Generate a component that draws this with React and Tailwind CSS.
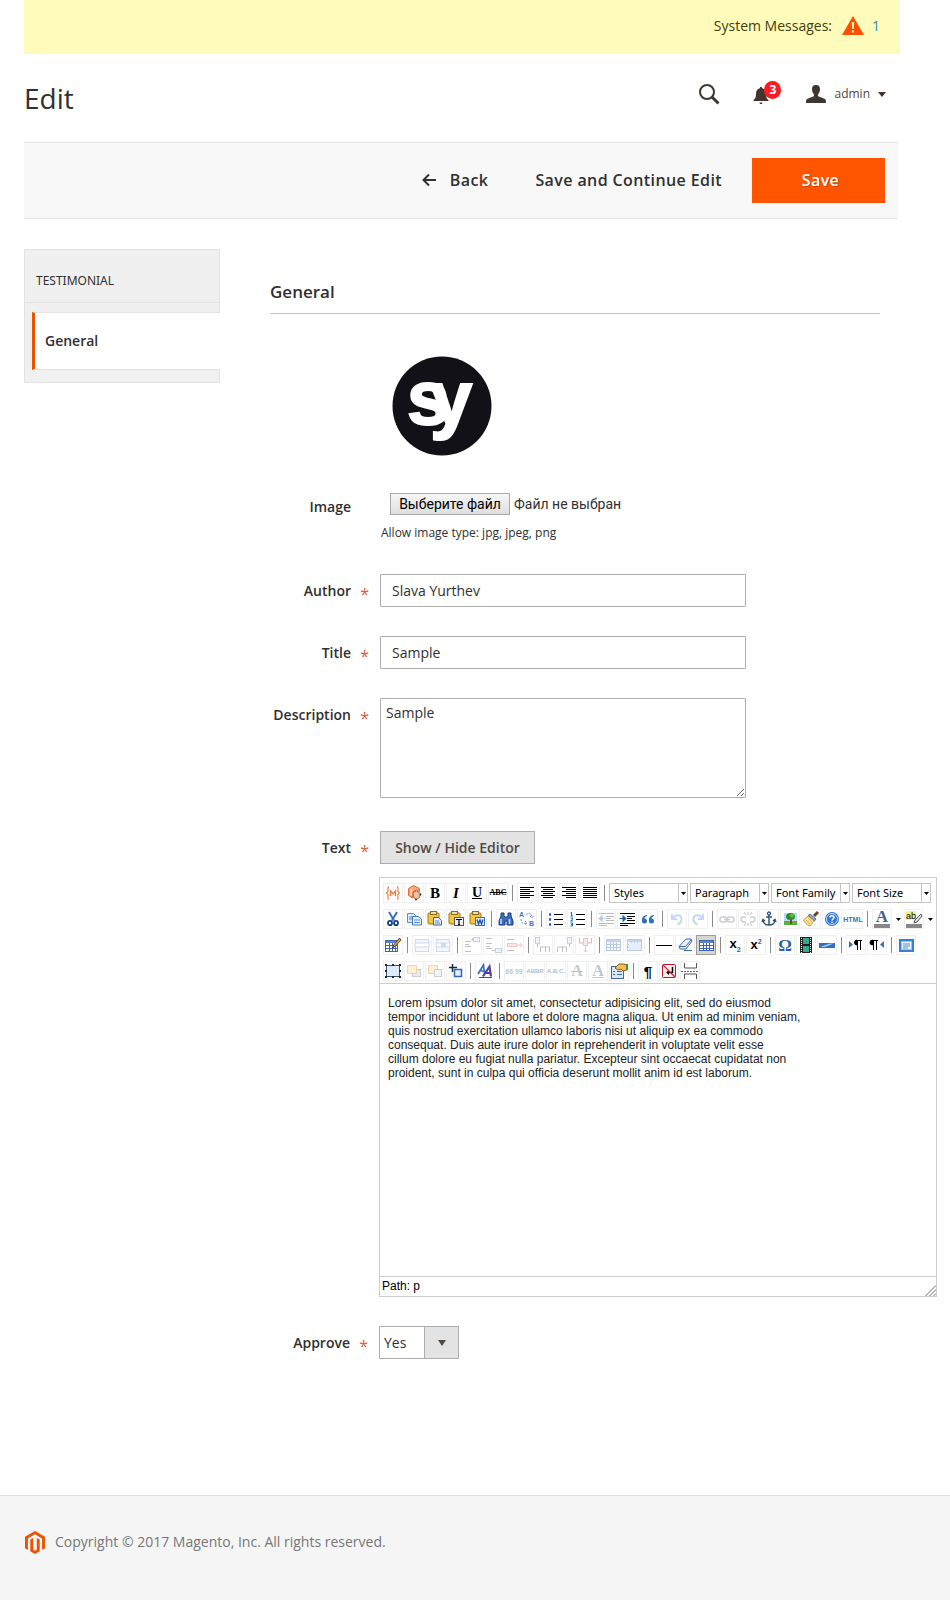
import React from "react";

const Svg = ({ children, className = "" }) => (
  <svg viewBox="0 0 20 20" width="20" height="20" className={"block " + className} fill="none" aria-hidden="true">
    {children}
  </svg>
);

const Lines = ({ rows }) => (
  <Svg>
    {rows.map(([x, w], i) => (
      <rect key={i} x={x} y={4 + i * 2} width={w} height="1" fill="#000" />
    ))}
  </Svg>
);

const Clip = () => (
  <>
    <rect x="3" y="4" width="11" height="11" rx="1" fill="#f4c63c" stroke="#a87410" />
    <rect x="5.500" y="2.500" width="6" height="3" fill="#e8e0b0" stroke="#8a6a20" />
  </>
);

const Grid = ({ x = 3, y = 5, w = 15, h = 11, c = "#3f66a8", head = "#5b86cf", fill = "#fff" }) => (
  <>
    <rect x={x + 0.5} y={y + 0.5} width={w - 1} height={h - 1} fill={fill} stroke={c} />
    <rect x={x + 1} y={y + 1} width={w - 2} height="2" fill={head} />
    <path d={`M${x + 4.5} ${y + 3}v${h - 3}M${x + 7.5} ${y + 3}v${h - 3}M${x + 10.5} ${y + 3}v${h - 3}M${x} ${y + 5.5}h${w}M${x} ${y + 8.5}h${w}`} stroke={c} />
  </>
);

const FADE = "opacity-30";

const ICONS = {
  variable: (
    <Svg>
      <path d="M6 4C4 4 5.500 7 5 8.500L3.500 10 5 11.500C5.500 13 4 16 6 16M14 4c2 0 .5 3 1 4.500L16.500 10 15 11.500c-.5 1.500 1 4.500-1 4.500" stroke="#f28c5a" strokeWidth="1.300" />
      <path d="M7.500 13V8l2.500 3 2.500-3v5" stroke="#ef7b45" strokeWidth="1.400" />
    </Svg>
  ),
  widget: (
    <Svg>
      <path d="M9.500 2.500l6 3v3l-3-1.500-4 2v6l-4-2.500v-7z" fill="#f9a67d" stroke="#e9662c" />
      <path d="M7.500 6.500v6" stroke="#fff" strokeWidth="1.500" />
      <path d="M9 9.500l3.500-1.500 4 2.500-1 4-3 2-3-2z" fill="#e6c3ae" stroke="#b8623a" />
      <circle cx="16.500" cy="11.500" r="1" fill="#333" /><circle cx="12" cy="16.500" r="1" fill="#333" />
    </Svg>
  ),
  left: <Lines rows={[[3, 14], [3, 10], [3, 14], [3, 10], [3, 14], [3, 10]]} />,
  center: <Lines rows={[[3, 14], [5, 10], [3, 14], [5, 10], [3, 14], [5, 10]]} />,
  right: <Lines rows={[[3, 14], [7, 10], [3, 14], [7, 10], [3, 14], [7, 10]]} />,
  full: <Lines rows={[[3, 14], [3, 14], [3, 14], [3, 14], [3, 14], [3, 14]]} />,
  cut: (
    <Svg>
      <path d="M6 3l5 8.500M14 3L9 11.500" stroke="#3f6fb8" strokeWidth="2" />
      <ellipse cx="7" cy="14" rx="2" ry="2.200" stroke="#123f86" strokeWidth="1.800" /><ellipse cx="13" cy="14" rx="2" ry="2.200" stroke="#123f86" strokeWidth="1.800" />
    </Svg>
  ),
  copy: (
    <Svg>
      <path d="M3.500 4.500h6l2 2v7h-8z" fill="#dceafc" stroke="#5b8bd0" /><path d="M5 8h5M5 10h5" stroke="#5b8bd0" />
      <path d="M8.500 7.500h6l3 2.500v6h-9z" fill="#e8f1fd" stroke="#3f74c4" /><path d="M10 11h6M10 13.500h6" stroke="#5b8bd0" />
    </Svg>
  ),
  paste: (
    <Svg><Clip /><path d="M8.500 8.500h5l3 3v4.500h-8z" fill="#e8f1fd" stroke="#3c5f95" /><path d="M10 12h4M10 14h5" stroke="#5b8bd0" /></Svg>
  ),
  pasteText: (
    <Svg><Clip /><rect x="8.500" y="8.500" width="9" height="8" fill="#f3f3f3" stroke="#555" /><path d="M10.500 11v-.5h5v.5M13 10.500v5M12 15.500h2" stroke="#000" strokeWidth="1.200" /></Svg>
  ),
  pasteWord: (
    <Svg><Clip /><rect x="8.500" y="8.500" width="9" height="8" fill="#dbe9fc" stroke="#3c6fc0" /><path d="M10 10.500l1.500 4.500 1.500-4 1.500 4 1.500-4.500" stroke="#1c4fa8" strokeWidth="1.300" /></Svg>
  ),
  find: (
    <Svg>
      <path d="M5 4h3v3l1 1h2l1-1V4h3v3l2 5v4h-6v-4H9v4H3v-4l2-5z" fill="#3a6db8" stroke="#1b3f80" />
      <path d="M5 10v5M13.500 10v5" stroke="#cfe0fa" strokeWidth="1.500" />
    </Svg>
  ),
  replace: (
    <Svg>
      <text x="2" y="8" fontSize="7" fontFamily="Liberation Sans" fontWeight="bold" fill="#4877b8">A</text>
      <text x="12" y="17" fontSize="7" fontFamily="Liberation Sans" fontWeight="bold" fill="#4877b8">B</text>
      <path d="M9 6c3-3 5-2 6 2m-2-1l2 2 2-2.500M4 10c0 4 2 5 6 4m-2-2l2 2-2 2" stroke="#5c8fd6" strokeDasharray="2 1" />
    </Svg>
  ),
  bullets: (
    <Svg>
      <path d="M8 5.500h9M8 10.500h9M8 15.500h9" stroke="#000" />
      <path d="M3 5.500h2M3 10.500h2M3 15.500h2" stroke="#1c5fb0" strokeWidth="2.500" />
    </Svg>
  ),
  numbers: (
    <Svg>
      <path d="M9 5.500h9M9 10.500h9M9 15.500h9" stroke="#000" />
      <path d="M4.500 3v4M3.500 4h1M3.500 7h2.500M3.500 9h2v1.500l-2 1.500h2.500M3.500 14h2v3h-2M4 15.500h1.500" stroke="#1c6fc0" />
    </Svg>
  ),
  outdent: (
    <Svg className="opacity-40"><path d="M3 4.500h15M10 7.500h8M10 9.500h5M10 11.500h8M3 14.500h15M3 16.500h8" stroke="#555" /><path d="M3 9.500l3-3v6zM5 9.500h4" fill="#4070b0" stroke="#4070b0" /></Svg>
  ),
  indent: (
    <Svg><path d="M3 4.500h15M10 7.500h8M10 9.500h5M10 11.500h8M3 14.500h15M3 16.500h8" stroke="#000" /><path d="M9 9.500l-3-3v6zM2.500 9.500h4" fill="#1c5fb0" stroke="#1c5fb0" /></Svg>
  ),
  quote: (
    <Svg>
      <path d="M9 6C5 6.500 3.500 9 4 12a2.500 2.500 0 1 0 2.500-2.500C6.500 8 7.500 7.500 9 7zM16 6c-4 .5-5.500 3-5 6a2.500 2.500 0 1 0 2.500-2.500c0-1.500 1-2 2.500-2.500z" fill="#2f6fb8" />
    </Svg>
  ),
  undo: <Svg className={FADE}><path d="M5 5v5h5M5.500 9.500C8 5 14 5 14.500 9.500c.3 3-2 5-4 6" stroke="#4a7fd0" strokeWidth="2" /></Svg>,
  redo: <Svg className={FADE}><path d="M15 5v5h-5M14.500 9.500C12 5 6 5 5.500 9.500c-.3 3 2 5 4 6" stroke="#4a7fd0" strokeWidth="2" /></Svg>,
  link: <Svg className={FADE}><rect x="3" y="8" width="7" height="5" rx="2.500" stroke="#555c6b" strokeWidth="1.500" /><rect x="10" y="8" width="7" height="5" rx="2.500" stroke="#555c6b" strokeWidth="1.500" /><path d="M7 10.500h6" stroke="#555c6b" strokeWidth="1.500" /></Svg>,
  unlink: <Svg className={FADE}><path d="M8 8H5.500a2.500 2.500 0 0 0 0 5H8M12 8h2.500a2.500 2.500 0 0 1 0 5H12M10 3v3M10 14v3M6 3l2 3M14 3l-2 3M6 17l2-3M14 17l-2-3" stroke="#555c6b" strokeWidth="1.300" /></Svg>,
  anchor: <Svg><circle cx="10" cy="4.500" r="1.500" stroke="#2f5580" strokeWidth="1.300" /><path d="M10 6v10M7 8h6M4 11c0 3 2.500 5 6 5s6-2 6-5M3 13l1-2.500L6 12M17 13l-1-2.500L14 12" stroke="#2f5580" strokeWidth="1.500" /></Svg>,
  image: <Svg><rect x="4" y="4" width="13" height="12" fill="#b8dcf5" /><rect x="4" y="12" width="13" height="4" fill="#5fae3c" /><path d="M10 9h2v6h-2z" fill="#7a4a1c" /><ellipse cx="10.500" cy="7.500" rx="4.500" ry="3.500" fill="#2c8a2c" /><ellipse cx="12" cy="6.500" rx="2.500" ry="2" fill="#58b83c" /></Svg>,
  cleanup: <Svg><path d="M17 3l-4 4" stroke="#6a4a1c" strokeWidth="3" /><path d="M9 5l6 5-1.500 2L7 6.500z" fill="#8fa8cc" stroke="#55709a" /><path d="M7 7l6 5-4 5c-3-1-5-3-6.500-6z" fill="#fbe39a" stroke="#c49a30" /><path d="M5 11l4 4M7.500 9.500l3 3" stroke="#d8b050" /></Svg>,
  help: <Svg><circle cx="10" cy="10" r="7" fill="#2f74d0" /><circle cx="10" cy="10" r="5.500" stroke="#cfe3fb" /><path d="M8 8.500c0-2.500 4-2.500 4 0 0 1.500-2 1.500-2 3M10 12.500v1.500" stroke="#fff" strokeWidth="1.500" /></Svg>,
  hilite: (
    <Svg>
      <rect x="2" y="2" width="10" height="9" fill="#f9f08a" />
      <text x="2" y="10" fontSize="9" fontFamily="Liberation Sans" fill="#000">ab</text>
      <path d="M17 5l-6 6-1 3 3-1 5-6z" fill="#d9e4f2" stroke="#555" /><rect x="2" y="15" width="16" height="4" fill="#888" />
    </Svg>
  ),
  table: <Svg><Grid x={2} w={13} h={12} /><path d="M16.500 3l-6 7-1 3 3-2 5.500-6z" fill="#d99a4a" stroke="#6a4118" /></Svg>,
  rowProps: <Svg className={FADE}><rect x="3.500" y="4.500" width="13" height="12" fill="#dce8fa" stroke="#5b86cf" /><rect x="3" y="8" width="14" height="4" fill="#fff" stroke="#5b86cf" /></Svg>,
  cellProps: <Svg className={FADE}><rect x="3.500" y="4.500" width="13" height="12" fill="#dce8fa" stroke="#5b86cf" /><rect x="3" y="8" width="14" height="4" fill="#fff" stroke="#5b86cf" /><rect x="8" y="8" width="5" height="4" fill="#5b86cf" /></Svg>,
  rowBefore: <Svg className={FADE}><path d="M3 6.500h6M3 11.500h6M3 16.500h6M3 9.500h4" stroke="#333" /><rect x="11.500" y="2.500" width="6" height="4" fill="#cfe0fa" stroke="#3f66a8" /><path d="M9 4.500l2-1.500v3z" fill="#333" /></Svg>,
  rowAfter: <Svg className={FADE}><path d="M3 3.500h6M3 8.500h6M3 13.500h6M3 11.500h4" stroke="#333" /><rect x="12.500" y="13.500" width="6" height="4" fill="#cfe0fa" stroke="#3f66a8" /><path d="M9 15.500h3" stroke="#333" /></Svg>,
  rowDelete: <Svg className={FADE}><path d="M3 4.500h7M3 15.500h7" stroke="#333" /><rect x="3.500" y="8.500" width="9" height="3" fill="#f7b0b0" stroke="#c23b4b" /><path d="M12 10h6m-2-2l2 2-2 2" stroke="#c23b4b" /></Svg>,
  colBefore: <Svg className={FADE}><path d="M7.500 17v-5h9v5M12.500 12v5" stroke="#333" /><rect x="2.500" y="2.500" width="4" height="6" fill="#cfe0fa" stroke="#3f66a8" /><path d="M4.500 9v3" stroke="#333" /></Svg>,
  colAfter: <Svg className={FADE}><path d="M3.500 17v-5h9v5M8.500 12v5" stroke="#333" /><rect x="13.500" y="2.500" width="4" height="6" fill="#cfe0fa" stroke="#3f66a8" /><path d="M15.500 9v3" stroke="#333" /></Svg>,
  colDelete: <Svg className={FADE}><path d="M4.500 3v5h4M16.500 3v5h-4" stroke="#333" /><rect x="8.500" y="3.500" width="4" height="7" fill="#f7b0b0" stroke="#c23b4b" /><path d="M10.500 11v6m-2-2l2 2 2-2" stroke="#c23b4b" /></Svg>,
  split: <Svg className="opacity-35"><Grid x={2} y={4} h={12} fill="#dce8fa" /></Svg>,
  merge: <Svg className="opacity-35"><Grid x={2} y={4} h={12} fill="#cfe0fa" /><rect x="4" y="8" width="12" height="7" fill="#b5d0f5" /></Svg>,
  hr: <Svg><path d="M2 10.500h16" stroke="#000" /></Svg>,
  eraser: <Svg><path d="M11 4h5l1 2-6 8H5l-1-2.500z" fill="#eef4fc" stroke="#3f66a8" /><path d="M4.500 11.500h6l6-7M9 15.500h8" stroke="#3f66a8" /></Svg>,
  visual: <Svg><Grid /></Svg>,
  media: <Svg><rect x="4" y="2" width="12" height="16" fill="#222" /><path d="M5.500 3v15M14.500 3v15" stroke="#fff" strokeDasharray="1 1" /><rect x="7" y="3" width="6" height="6" fill="#37a88c" /><rect x="7" y="11" width="6" height="6" fill="#37a88c" /></Svg>,
  advhr: <Svg><rect x="2" y="8" width="16" height="5" fill="#2c6fc4" /><path d="M3 12l10-3.500h4L8 12z" fill="#a9cdf7" /></Svg>,
  ltr: <Svg><path d="M3 6l4 3.500L3 13z" fill="#3f6fb0" /><path d="M11 5a2.500 2.500 0 0 0 0 5z" fill="#000" stroke="#000" /><path d="M11.500 5v10M14.500 5v10M11 5.500h5" stroke="#000" /></Svg>,
  rtl: <Svg><path d="M17 6l-4 3.500 4 3.500z" fill="#3f6fb0" /><path d="M5.500 5a2.500 2.500 0 0 0 0 5z" fill="#000" stroke="#000" /><path d="M6.500 5v10M9.500 5v10M6 5.500h5" stroke="#000" /></Svg>,
  fullscreen: <Svg><rect x="3" y="4" width="15" height="13" fill="#3a7fd6" /><rect x="5.500" y="6.500" width="10" height="8" fill="#e9f2fd" stroke="#9cc3f2" /><path d="M7 9h7M7 11h7M7 13h5" stroke="#5a8fd0" /></Svg>,
  layer: <Svg><rect x="3.500" y="4.500" width="13" height="11" fill="#dfeafa" stroke="#3c4f6b" /><path d="M2 3h2v2H2zM16 3h2v2h-2zM2 15h2v2H2zM16 15h2v2h-2zM9 3h2v2H9zM9 15h2v2H9zM2 9h2v2H2zM16 9h2v2h-2z" fill="#16294a" /></Svg>,
  forward: <Svg className="opacity-45"><rect x="8.500" y="8.500" width="8" height="7" fill="#ccd5e2" stroke="#8895a8" /><rect x="3.500" y="4.500" width="9" height="8" fill="#fbe2a0" stroke="#d0a850" /></Svg>,
  backward: <Svg className="opacity-45"><rect x="3.500" y="4.500" width="9" height="8" fill="#fbe2a0" stroke="#d0a850" /><rect x="9.500" y="8.500" width="7" height="7" fill="#e2e6ec" stroke="#8895a8" /></Svg>,
  absolute: <Svg><path d="M6.500 3v8M3 6.500h8" stroke="#16294a" strokeWidth="1.500" /><rect x="8.500" y="8.500" width="7" height="7" fill="#e5effc" stroke="#2c68b8" strokeWidth="1.500" /></Svg>,
  css: <Svg><path d="M3 13L8.500 4l1 9M5 10h4" stroke="#2f6fc0" strokeWidth="1.700" /><path d="M8 15.500l6.500-10 1.500 10M10 12h6" stroke="#5a3fa0" strokeWidth="2.200" /><path d="M4 16.500h13" stroke="#5a3fa0" /></Svg>,
  attribs: <Svg><rect x="2.500" y="5.500" width="12" height="12" fill="#dce9fa" stroke="#3f66a8" /><path d="M4 10.500h2M8 10.500h5M4 13.500h2M8 13.500h5" stroke="#3f66a8" /><path d="M6 7l4-4h5l3 1v5l-4 1-2-2-3 1z" fill="#f3bf50" stroke="#8a5a18" /><path d="M17 3h2v6h-2z" fill="#3f9a3c" /></Svg>,
  nbsp: <Svg><rect x="3.500" y="3.500" width="13" height="13" rx="1" fill="#fdeaea" stroke="#b01c2c" /><path d="M13.500 6v5.500H9" stroke="#000" strokeWidth="1.500" /><path d="M7 11.500l3-2.500v5z" fill="#000" /><path d="M4 4l12 12" stroke="#c8283c" strokeWidth="1.200" /></Svg>,
  pagebreak: <Svg><path d="M4.500 2v5h12V2M4.500 18v-5h12v5" stroke="#555" /><path d="M1 10.500h18" stroke="#3a6fb8" strokeDasharray="2 1" /></Svg>,
};

const GLYPHS = {
  bold: <span className="font-['Liberation_Serif',serif] text-[15px] font-bold">B</span>,
  italic: <span className="font-['Liberation_Serif',serif] text-[15px] font-bold italic">I</span>,
  underline: <span className="font-['Liberation_Serif',serif] text-[14px] font-bold underline">U</span>,
  strike: <span className="font-['Liberation_Serif',serif] text-[8px] font-bold line-through">ABC</span>,
  html: <span className="font-['Liberation_Sans',sans-serif] text-[7px] font-bold text-[#2c7fa8]">HTML</span>,
  color: (
    <span className="flex flex-col items-center">
      <span className="font-['Liberation_Serif',serif] text-[17px] leading-[14px] font-bold text-[#3f6390]">A</span>
      <span className="h-1 w-4 bg-[#888]" />
    </span>
  ),
  sub: <span className="font-['Liberation_Sans',sans-serif] text-[13px] font-bold">x<span className="align-sub text-[7px] text-[#2c5f98]">2</span></span>,
  sup: <span className="font-['Liberation_Sans',sans-serif] text-[13px] font-bold">x<span className="align-super text-[7px] text-[#2c5f98]">2</span></span>,
  omega: <span className="font-['Liberation_Serif',serif] text-[17px] font-bold text-[#2c5f9e]">Ω</span>,
  cite: <span className="font-['Liberation_Sans',sans-serif] text-[7px] font-bold text-[#bcc8d8]">66 99</span>,
  abbr: <span className="font-['Liberation_Sans',sans-serif] text-[6px] font-bold text-[#b4bcc6]">ABBR</span>,
  acronym: <span className="font-['Liberation_Sans',sans-serif] text-[6px] font-bold text-[#b4bcc6]">A.B.C.</span>,
  del: <span className="font-['Liberation_Serif',serif] text-[16px] font-bold text-[#c3c9d4] line-through decoration-[#e4a9b4]">A</span>,
  ins: <span className="font-['Liberation_Serif',serif] text-[16px] font-bold text-[#b9c6da] underline decoration-[#a9d9ae]">A</span>,
  pilcrow: <span className="font-['Liberation_Sans',sans-serif] text-[15px] font-bold">¶</span>,
};

const ROWS = [
  ["variable", "widget", "bold", "italic", "underline", "strike", "|", "left", "center", "right", "full", "|", "@Styles", "@Paragraph", "@Font Family", "@Font Size"],
  ["cut", "copy", "paste", "pasteText", "pasteWord", "|", "find", "replace", "|", "bullets", "numbers", "|", "outdent", "indent", "quote", "|", "undo", "redo", "|", "link", "unlink", "anchor", "image", "cleanup", "help", "html", "|", "color", "v", "hilite", "v"],
  ["table", "|", "rowProps", "cellProps", "|", "rowBefore", "rowAfter", "rowDelete", "|", "colBefore", "colAfter", "colDelete", "|", "split", "merge", "|", "hr", "eraser", "visual", "|", "sub", "sup", "|", "omega", "media", "advhr", "|", "ltr", "rtl", "|", "fullscreen"],
  ["layer", "forward", "backward", "absolute", "|", "css", "|", "cite", "abbr", "acronym", "del", "ins", "attribs", "|", "pilcrow", "nbsp", "pagebreak"],
];

const Caret = ({ className = "" }) => (
  <svg viewBox="0 0 5 3" width="5" height="3" className={className} aria-hidden="true">
    <path d="M0 0h5L2.500 3z" fill="#000" />
  </svg>
);

function Tool({ name }) {
  if (name === "|") return <span className="mr-1 ml-[3px] h-4 w-px bg-[#8a8a8a]" />;
  if (name === "v")
    return (
      <button type="button" aria-label="More colors" className="flex h-5 w-[11px] items-center justify-center">
        <Caret />
      </button>
    );
  if (name[0] === "@") {
    const label = name.slice(1);
    return (
      <span className="relative mr-0.5 block h-5 w-[79px]">
        <select aria-label={label} className="block h-5 w-full appearance-none border border-[#c4c4c4] bg-white pl-1 font-['Noto_Sans',sans-serif] text-[11px] leading-4 text-black">
          <option>{label}</option>
        </select>
        <span className="pointer-events-none absolute inset-y-0 right-0 flex w-2.5 items-center justify-center border border-[#c4c4c4]">
          <Caret className="shrink-0" />
        </span>
      </span>
    );
  }
  const on = name === "visual";
  return (
    <button
      type="button"
      aria-label={name}
      aria-pressed={on}
      className={
        "mr-px flex h-5 w-5 shrink-0 items-center justify-center border leading-none text-black " +
        (on ? "border-[#9c9c9c] bg-[#d8d4cf]" : "border-[#f0f0ee]")
      }
    >
      {ICONS[name] ? <span className="block shrink-0">{ICONS[name]}</span> : GLYPHS[name]}
    </button>
  );
}

function Field({ label, id, required = true, children, className = "" }) {
  return (
    <div className={"flex items-start " + className}>
      <label htmlFor={id} className="w-[81px] shrink-0 text-right text-[14px] leading-[33px] font-semibold text-[#303030]">
        {label}
      </label>
      <span className="w-[29px] shrink-0 pr-[11px] text-right text-[16px] leading-[41px] text-[#e0593a]" aria-hidden="true">
        {required ? "*" : ""}
      </span>
      <div className="min-w-0 flex-1">{children}</div>
    </div>
  );
}

const INPUT = "block w-full max-w-[366px] rounded-[1px] border border-[#adadad] bg-white text-[14px] text-[#303030]";

export default function App() {
  return (
    <div className="flex min-h-screen flex-col bg-white font-['Open_Sans','Noto_Sans',sans-serif] text-[#303030]">
      <div className="mr-[50px] ml-6 flex h-[54px] items-center justify-end bg-[#fffbbb] pr-5 pb-1 text-[14px]">
        <span className="text-[#41400f]">System Messages:</span>
        <svg viewBox="0 0 22 19" width="22" height="19" className="ml-2.5" aria-hidden="true">
          <path d="M11 0l11 19H0z" fill="#fb5003" />
          <path d="M9.800 6h2.400l-.4 7h-1.600zM10 14.500h2v2h-2z" fill="#fffbbb" />
        </svg>
        <a href="#messages" className="ml-2 text-[#2f8fa8]">1</a>
      </div>

      <header className="mr-[50px] ml-6 flex h-[88px] items-center justify-between pr-3.5">
        <h1 className="text-[28px] leading-9">Edit</h1>
        <div className="flex items-center pb-2">
          <button type="button" aria-label="Search">
            <svg viewBox="0 0 22 22" width="22" height="22" fill="none" stroke="#41362f" aria-hidden="true">
              <circle cx="9" cy="9" r="7" strokeWidth="2" />
              <path d="M14 14l6.500 6.500" strokeWidth="3" />
            </svg>
          </button>
          <button type="button" aria-label="Notifications" className="relative ml-[33px] h-[22px] w-[30px]">
            <svg viewBox="0 0 16 18" width="16" height="18" className="mt-1" fill="#41362f" aria-hidden="true">
              <path d="M8 0c.8 0 1.200.5 1.200 1.200C12 2 13 4 13 7c0 3 .7 5 2.500 6v1H.5v-1C2.300 12 3 10 3 7c0-3 1-5 3.800-5.800C6.800.5 7.200 0 8 0zM6.500 15.500h3c0 1-.7 1.500-1.500 1.500s-1.500-.5-1.500-1.500z" />
            </svg>
            <span className="absolute -top-0.5 right-0.5 flex h-[18px] w-[17px] items-center justify-center rounded-full bg-[#f81c24] text-[12px] leading-none font-bold text-white">3</span>
          </button>
          <button type="button" className="ml-[23px] flex items-center text-[12px] text-[#504840]">
            <svg viewBox="0 0 20 18" width="20" height="18" fill="#41362f" aria-hidden="true">
              <path d="M10 0c2.800 0 4 1.600 4 4.200 0 2.300-.8 3.800-1.900 5.100v1.600c.8 1 6 2.100 7.400 3.500.4.500.5 2.200.5 3.600H0c0-1.400.1-3.100.5-3.600 1.400-1.400 6.600-2.500 7.400-3.500V9.300C6.800 8 6 6.500 6 4.200 6 1.600 7.200 0 10 0z" />
            </svg>
            <span className="ml-2">admin</span>
            <svg viewBox="0 0 8 5" width="8" height="5" className="ml-2" aria-hidden="true"><path d="M0 0h8L4 5z" fill="#41362f" /></svg>
          </button>
        </div>
      </header>

      <div className="mr-[52px] ml-6 flex h-[77px] items-center justify-end border-y border-[#e3e3e3] bg-[#f8f8f8] pr-[13px] text-[16px] font-semibold tracking-wide">
        <button type="button" className="flex items-center pb-0.5 tracking-wide">
          <svg viewBox="0 0 14 12" width="14" height="12" fill="none" stroke="#303030" strokeWidth="2" className="mr-3.5" aria-hidden="true">
            <path d="M7 0.500L1.500 6 7 11.500M1.500 6H14" />
          </svg>
          Back
        </button>
        <button type="button" className="ml-[47px] pb-0.5 tracking-wide">Save and Continue Edit</button>
        <button type="button" className="ml-[30px] h-[45px] w-[133px] bg-[#ff5501] pb-0.5 pl-1 tracking-wide text-white [text-shadow:1px_1px_0_#00000040]">Save</button>
      </div>

      <div className="flex items-start pt-[30px] pr-[13px] pl-6">
        <aside className="w-[196px] shrink-0 border border-[#e3e3e3] bg-[#f0f0f0] pb-3">
          <h2 className="border-b border-[#e3e3e3] pt-[19px] pb-[9px] pl-[11px] font-['Noto_Sans',sans-serif] text-[12px] leading-6">TESTIMONIAL</h2>
          <nav className="-mr-px mt-[9px] ml-[7px]">
            <a href="#general" className="block border-y border-l-[3px] border-y-[#e3e3e3] border-l-[#eb5202] bg-white pl-2.5 text-[14px] leading-[56px] font-semibold">General</a>
          </nav>
        </aside>

        <main className="ml-[50px] min-w-0 flex-1">
          <h2 className="mt-[29px] mr-[57px] border-b border-[#c6c5b8] pb-[7px] text-[17px] leading-7 font-semibold">General</h2>

          <svg viewBox="0 0 100 100" width="100" height="100" className="mt-[42px] ml-[122px] overflow-visible" role="img" aria-label="Testimonial author">
            <circle cx="50" cy="50" r="49.500" fill="#121117" />
            <text x="15 38" y="68" fill="#fff" stroke="#fff" strokeWidth="2" fontFamily="Liberation Sans" fontWeight="bold" fontSize="76">sy</text>
          </svg>

          <Field label="Image" id="image" required={false} className="mt-[34px]">
            <div className="flex items-center pt-[3px] pl-2.5 font-['Roboto',sans-serif] text-[14px] leading-5">
              <input id="image" type="file" className="sr-only" />
              <label htmlFor="image" className="h-[22px] w-[120px] border border-[#a9a9a9] bg-linear-to-b from-[#f6f6f6] to-[#dedede] text-center text-black">Выберите файл</label>
              <span className="ml-1">Файл не выбран</span>
            </div>
            <p className="mt-2 pl-px text-[12px] leading-5">Allow image type: jpg, jpeg, png</p>
          </Field>

          <Field label="Author" id="author" className="mt-[31px]">
            <input id="author" type="text" defaultValue="Slava Yurthev" className={INPUT + " h-[33px] px-[11px]"} />
          </Field>
          <Field label="Title" id="title" className="mt-[21px]">
            <input id="title" type="text" defaultValue="Sample" className={INPUT + " h-[33px] px-[11px]"} />
          </Field>
          <Field label="Description" id="description" className="mt-[21px]">
            <textarea id="description" defaultValue="Sample" className={INPUT + " h-[100px] px-[5px] py-1 leading-5"} />
          </Field>

          <Field label="Text" id="toggle" className="mt-[33px]">
            <button id="toggle" type="button" className="h-[33px] w-[155px] border border-[#adadad] bg-[#e3e3e3] text-[14px] font-semibold text-[#514943]">
              Show / Hide Editor
            </button>
            <div className="mt-[13px] -ml-px border border-[#ccc]">
              <div className="flex flex-col gap-1.5 border-b border-[#ccc] pt-[5px] pb-0.5 pl-[3px]">
                {ROWS.map((row, i) => (
                  <div key={i} className="flex h-5 items-center">
                    {row.map((name, j) => (
                      <Tool key={j} name={name} />
                    ))}
                  </div>
                ))}
              </div>
              <div className="min-h-[292px] px-2 pt-3 font-['Liberation_Sans',sans-serif] text-[12px] leading-[14px] text-[#222]">
                <p>
                  Lorem ipsum dolor sit amet, consectetur adipisicing elit, sed do eiusmod<br />
                  tempor incididunt ut labore et dolore magna aliqua. Ut enim ad minim veniam,<br />
                  quis nostrud exercitation ullamco laboris nisi ut aliquip ex ea commodo<br />
                  consequat. Duis aute irure dolor in reprehenderit in voluptate velit esse<br />
                  cillum dolore eu fugiat nulla pariatur. Excepteur sint occaecat cupidatat non<br />
                  proident, sunt in culpa qui officia deserunt mollit anim id est laborum.
                </p>
              </div>
              <div className="flex h-5 items-end justify-between border-t border-[#ccc] pl-0.5">
                <span className="font-['Liberation_Sans',sans-serif] text-[12px] leading-[19px] text-black">Path: p</span>
                <svg viewBox="0 0 11 11" width="11" height="11" stroke="#666" aria-hidden="true">
                  <path d="M0.500 11L11 0.500M4.500 11L11 4.500M8.500 11L11 8.500" />
                </svg>
              </div>
            </div>
          </Field>

          <Field label="Approve" id="approve" className="mt-[29px] -ml-px">
            <div className="relative h-[33px] w-20">
              <select id="approve" className="block h-full w-full appearance-none rounded-[1px] border border-[#adadad] bg-white pl-1 text-[14px]">
                <option>Yes</option>
                <option>No</option>
              </select>
              <span className="pointer-events-none absolute inset-y-0 right-0 flex w-[35px] items-center justify-center border border-[#adadad] bg-[#e3e3e3]">
                <svg viewBox="0 0 8 6" width="8" height="6" aria-hidden="true"><path d="M0 0h8L4 6z" fill="#514943" /></svg>
              </span>
            </div>
          </Field>
        </main>
      </div>

      <footer className="mt-auto flex h-[105px] items-start border-t border-[#dcdfdf] bg-[#f5f5f5] pt-[35px] pl-[25px]">
        <svg viewBox="0 0 20 23" width="20" height="23" fill="#eb5202" aria-hidden="true">
          <path d="M10 0l10 5.800v11.500l-2.900 1.600V7.400L10 3.300 2.900 7.400v11.500L0 17.300V5.800z" />
          <path d="M5.300 8.500L8.200 7v11.800l1.800 1 1.800-1V7l2.900 1.500v11.700L10 23l-4.700-2.800z" />
        </svg>
        <p className="ml-2.5 text-[14px] leading-[22px] text-[#777]">Copyright © 2017 Magento, Inc. All rights reserved.</p>
      </footer>
    </div>
  );
}
